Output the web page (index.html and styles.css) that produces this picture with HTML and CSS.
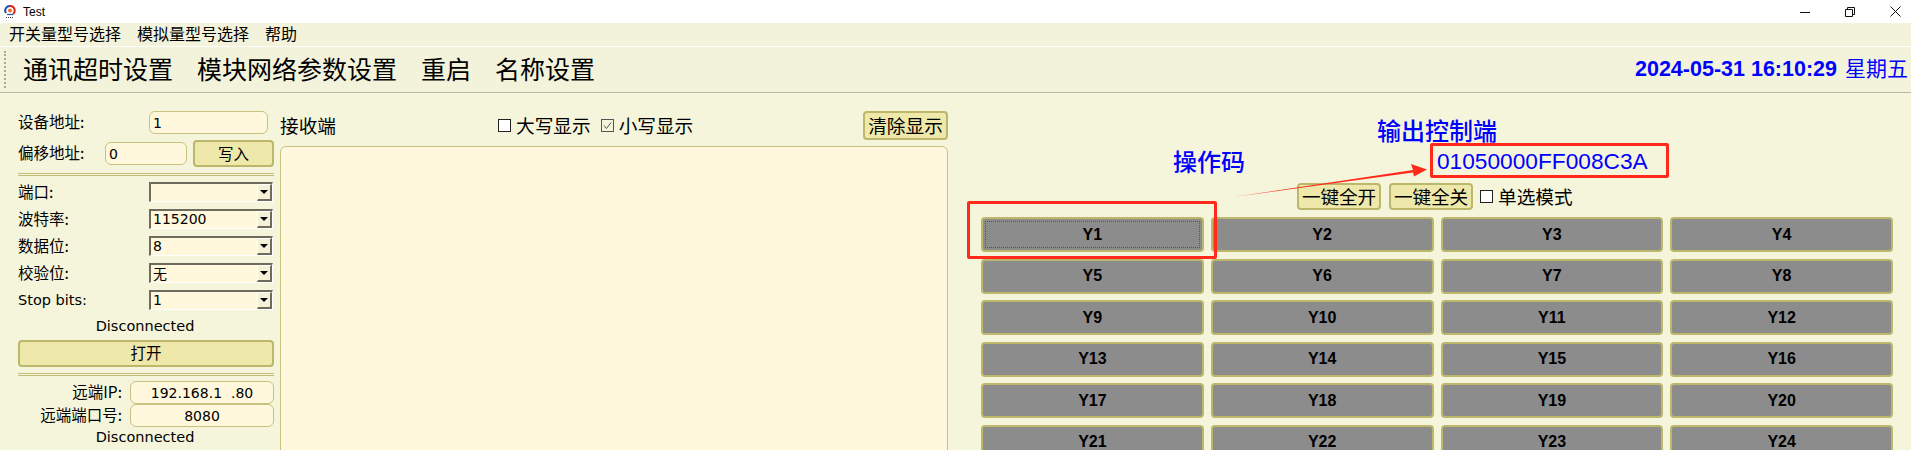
FILE: index.html
```html
<!DOCTYPE html>
<html lang="en">
<head>
    <meta charset="UTF-8">
    <meta name="viewport" content="width=device-width, initial-scale=1.0">
    <title>Test</title>
    <link rel="stylesheet" href="styles.css">
</head>
<body>
    <div class="titlebar">
        <svg class="app-icon" width="12" height="14" viewBox="0 0 12 14">
            <path d="M6 1A4.5 4.5 0 0 0 2 8" fill="none" stroke="#1f4fb0" stroke-width="2"/>
            <path d="M6 1A4.5 4.5 0 0 1 9 9" fill="none" stroke="#d8281e" stroke-width="2"/>
            <circle cx="6" cy="5.5" r="2" fill="#e8702a"/>
            <path d="M3 9.5h6" stroke="#1f4fb0" stroke-width="1.2"/>
            <path d="M2 12.5h1M4 12.5h1M6 12.5h1M8 12.5h1" stroke="#333" stroke-width="1"/>
        </svg>
        <span class="title-text">Test</span>
        <div class="window-buttons">
            <svg width="10" height="10" viewBox="0 0 10 10"><path d="M0 5.5h10" stroke="#111" fill="none"/></svg>
            <svg width="10" height="10" viewBox="0 0 10 10"><path d="M.5 2.5h7v7h-7zM2.5 2.5v-2h7v7h-2" stroke="#111" fill="none"/></svg>
            <svg width="11" height="11" viewBox="0 0 11 11"><path d="M.5 .5l10 10M10.5 .5l-10 10" stroke="#111" fill="none"/></svg>
        </div>
    </div>

    <div class="menubar">
        <span class="menu-item">开关量型号选择</span>
        <span class="menu-item">模拟量型号选择</span>
        <span class="menu-item">帮助</span>
    </div>

    <div class="toolbar">
        <div class="grip"></div>
        <div class="tool-item">通讯超时设置</div>
        <div class="tool-item">模块网络参数设置</div>
        <div class="tool-item">重启</div>
        <div class="tool-item">名称设置</div>
        <div class="clock"><span class="clock-time">2024-05-31 16:10:29</span><span class="clock-day">星期五</span></div>
    </div>

    <div class="main">
        <div class="left-panel">
            <div class="row first-row">
                <span class="label wide-label">设备地址:</span>
                <div class="field device-field">1</div>
            </div>
            <div class="row write-row">
                <span class="label offset-label">偏移地址:</span>
                <div class="field offset-field">0</div>
                <div class="button write-button">写入</div>
            </div>
            <div class="separator"></div>
            <div class="combo-list">
                <div class="row combo-row"><span class="label wide-label">端口:</span><div class="combo"><span class="combo-arrow"></span></div></div>
                <div class="row combo-row"><span class="label wide-label">波特率:</span><div class="combo">115200<span class="combo-arrow"></span></div></div>
                <div class="row combo-row"><span class="label wide-label">数据位:</span><div class="combo">8<span class="combo-arrow"></span></div></div>
                <div class="row combo-row"><span class="label wide-label">校验位:</span><div class="combo combo-cjk">无<span class="combo-arrow"></span></div></div>
                <div class="row combo-row"><span class="label wide-label latin">Stop bits:</span><div class="combo">1<span class="combo-arrow"></span></div></div>
            </div>
            <div class="status">Disconnected</div>
            <div class="button open-button">打开</div>
            <div class="separator"></div>
            <div class="row remote-row">
                <span class="label remote-label">远端IP:</span>
                <div class="field remote-field">192.168.1&nbsp;&nbsp;.80</div>
            </div>
            <div class="row remote-row">
                <span class="label remote-label">远端端口号:</span>
                <div class="field remote-field">8080</div>
            </div>
            <div class="status status-small">Disconnected</div>
            <div class="separator"></div>
        </div>

        <div class="center-panel">
            <div class="receive-head">
                <span class="receive-title">接收端</span>
                <label class="check"><span class="check-box"></span><span class="check-text">大写显示</span></label>
                <label class="check"><span class="check-box is-checked"><svg width="11" height="11" viewBox="0 0 11 11"><path d="M2 5.5l2.5 3L9 2.5" stroke="#555" fill="none"/></svg></span><span class="check-text">小写显示</span></label>
                <div class="button clear-button">清除显示</div>
            </div>
            <div class="receive-box"></div>
        </div>

        <div class="right-panel">
            <div class="output-actions">
                <div class="button action-button">一键全开</div>
                <div class="button action-button">一键全关</div>
                <label class="check"><span class="check-box"></span><span class="check-text">单选模式</span></label>
            </div>
            <div class="output-grid">
                <div class="button output-button"><span class="focus-ring">Y1</span></div>
                <div class="button output-button">Y2</div>
                <div class="button output-button">Y3</div>
                <div class="button output-button">Y4</div>
                <div class="button output-button">Y5</div>
                <div class="button output-button">Y6</div>
                <div class="button output-button">Y7</div>
                <div class="button output-button">Y8</div>
                <div class="button output-button">Y9</div>
                <div class="button output-button">Y10</div>
                <div class="button output-button">Y11</div>
                <div class="button output-button">Y12</div>
                <div class="button output-button">Y13</div>
                <div class="button output-button">Y14</div>
                <div class="button output-button">Y15</div>
                <div class="button output-button">Y16</div>
                <div class="button output-button">Y17</div>
                <div class="button output-button">Y18</div>
                <div class="button output-button">Y19</div>
                <div class="button output-button">Y20</div>
                <div class="button output-button">Y21</div>
                <div class="button output-button">Y22</div>
                <div class="button output-button">Y23</div>
                <div class="button output-button">Y24</div>
            </div>
        </div>
    </div>

    <!-- red and blue notes drawn over the screenshot -->
    <div class="note note-output">输出控制端</div>
    <div class="note note-opcode">操作码</div>
    <div class="note-box code-box">01050000FF008C3A</div>
    <div class="note-box y1-box"></div>
    <svg class="note-arrow" width="1911" height="450" viewBox="0 0 1911 450">
        <polygon points="1233,197 1413,170 1411,164 1427,169.5 1414,176.5 1413,172.5" fill="#ff2a1a"/>
    </svg>
</body>
</html>
```

FILE: styles.css
```css
html, body {
    height: 100%;
}
body {
    background-color: #f5f5dc;
    font-family: "Noto Sans CJK SC", "Liberation Sans", sans-serif;
    color: #000;
    margin: 0;
    padding: 0;
    overflow: hidden;
    position: relative;
}

/* window chrome */
.titlebar {
    height: 23px;
    background-color: #fff;
    display: flex;
    align-items: center;
    padding-left: 4px;
}
.app-icon {
    margin-right: 7px;
}
.title-text {
    font-family: "Liberation Sans", sans-serif;
    font-size: 12px;
}
.window-buttons {
    margin-left: auto;
    display: flex;
    align-items: center;
    gap: 35px;
    padding-right: 10px;
}
.menubar {
    height: 23px;
    background-color: #f3f3db;
    border-bottom: 1px solid #fff;
    display: flex;
    align-items: center;
}
.menu-item {
    font-size: 16px;
    line-height: 21px;
    padding: 0 8px 2px;
}
.menu-item:first-child {
    margin-left: 1px;
}
.toolbar {
    height: 45px;
    background-color: #f3f3db;
    border-bottom: 1px solid #b9b9a3;
    display: flex;
    align-items: center;
    padding-left: 4px;
}
.grip {
    width: 2px;
    height: 37px;
    border-left: 2px dotted #a9a9a0;
    margin-right: 15px;
}
.tool-item {
    font-size: 25px;
    line-height: 43px;
    padding-bottom: 2px;
    margin-right: 24px;
}
.clock {
    margin-left: auto;
    color: #0000ff;
    display: flex;
    align-items: center;
    padding-right: 3px;
}
.clock-time {
    font-family: "Liberation Sans", sans-serif;
    font-weight: bold;
    font-size: 21.5px;
}
.clock-day {
    font-size: 21px;
    line-height: 30px;
    padding-bottom: 5px;
    margin-left: 8px;
}

/* page columns */
.main {
    display: flex;
}
.left-panel {
    width: 256px;
    padding: 0 6px 0 18px;
    flex: none;
}
.center-panel {
    width: 668px;
    flex: none;
}
.right-panel {
    width: 912px;
    padding-left: 33px;
    flex: none;
}

/* left form */
.row {
    display: flex;
    align-items: center;
}
.first-row {
    margin-top: 18px;
    height: 23px;
}
.write-row {
    margin-top: 6px;
    height: 27px;
}
.label {
    font-size: 15.5px;
    line-height: 20px;
    padding-bottom: 3px;
    white-space: nowrap;
    flex: none;
}
.latin {
    font-family: "DejaVu Sans", sans-serif;
    font-size: 14.5px;
    padding-bottom: 0;
}
.wide-label {
    width: 131px;
}
.offset-label {
    width: 87px;
}
.field {
    background-color: #fff8dc;
    border: 1px solid #c9c27f;
    border-radius: 6px;
    box-sizing: border-box;
    height: 23px;
    line-height: 23px;
    padding-left: 3px;
    font-family: "DejaVu Sans", sans-serif;
    font-size: 14px;
}
.device-field {
    width: 119px;
}
.offset-field {
    width: 82px;
}
.button {
    background-color: #eee8aa;
    border: 2px solid #bdb76b;
    border-radius: 4px;
    box-sizing: border-box;
    display: flex;
    align-items: center;
    justify-content: center;
    white-space: nowrap;
}
.write-button {
    width: 81px;
    height: 27px;
    margin-left: 6px;
    padding-bottom: 2px;
    font-size: 15.5px;
}
.separator {
    height: 1px;
    border-top: 1px solid #c4bd78;
    border-bottom: 1px solid #c4bd78;
    margin-top: 6px;
}
.combo-list {
    margin-top: 6px;
    display: flex;
    flex-direction: column;
    gap: 7px;
}
.combo-row {
    height: 20px;
}
.combo {
    width: 124px;
    height: 20px;
    box-sizing: border-box;
    background-color: #fff8dc;
    border-top: 2px solid #6e6a5e;
    border-left: 2px solid #6e6a5e;
    border-right: 1px solid #fff;
    border-bottom: 1px solid #fff;
    position: relative;
    padding-left: 2px;
    font-family: "DejaVu Sans", sans-serif;
    font-size: 14px;
    line-height: 16px;
}
.combo-cjk {
    font-family: "Noto Sans CJK SC", sans-serif;
}
.combo-arrow {
    position: absolute;
    right: 0;
    top: 0;
    bottom: 0;
    width: 15px;
    box-sizing: border-box;
    background-color: #f5f1d8;
    border-right: 2px solid #6e6a5e;
    border-bottom: 2px solid #6e6a5e;
    border-top: 1px solid #fff;
    border-left: 1px solid #fff;
}
.combo-arrow::after {
    content: "";
    position: absolute;
    left: 2px;
    top: 5px;
    border-left: 4px solid transparent;
    border-right: 4px solid transparent;
    border-top: 4px solid #000;
}
.status {
    font-family: "DejaVu Sans", sans-serif;
    font-size: 14.5px;
    text-align: center;
    height: 20px;
    line-height: 22px;
    margin-top: 5px;
    padding-right: 2px;
}
.status-small {
    height: 18px;
    line-height: 20px;
    margin-top: 0;
}
.open-button {
    height: 27px;
    margin-top: 5px;
    padding-bottom: 3px;
    font-size: 15.5px;
}
.remote-row {
    height: 23px;
}
.remote-row .field {
    text-align: center;
    padding-left: 0;
}
.separator + .remote-row {
    margin-top: 5px;
}
.remote-label {
    width: 104px;
    margin-right: 8px;
    text-align: right;
}
.remote-field {
    width: 144px;
}

/* receive area */
.receive-head {
    margin-top: 18px;
    height: 29px;
    display: flex;
    align-items: center;
}
.receive-title {
    font-size: 18.67px;
    line-height: 26px;
    padding-bottom: 2px;
    width: 218px;
    flex: none;
}
.check {
    display: flex;
    align-items: center;
    gap: 5px;
    font-size: 18.67px;
    margin-right: 10px;
}
.check-text {
    line-height: 26px;
    padding-bottom: 2px;
}
.check-box {
    width: 13px;
    height: 13px;
    box-sizing: border-box;
    background-color: #fff;
    border: 1px solid #222;
    display: block;
    flex: none;
}
.check-box.is-checked {
    background-color: transparent;
    border-color: #555;
}
.check-box svg {
    display: block;
}
.clear-button {
    margin-left: auto;
    width: 85px;
    height: 29px;
    padding-bottom: 2px;
    font-size: 18.67px;
}
.receive-box {
    margin-top: 6px;
    height: 320px;
    background-color: #fff8dc;
    border: 1px solid #c9c27f;
    border-radius: 6px;
    box-sizing: border-box;
}

/* output buttons */
.output-actions {
    margin-top: 90px;
    margin-left: 316px;
    height: 27px;
    display: flex;
    align-items: center;
    gap: 8px;
}
.action-button {
    width: 84px;
    height: 27px;
    padding-bottom: 2px;
    font-size: 18.67px;
    letter-spacing: -0.2px;
}
.output-actions .check {
    margin-left: -1px;
}
.output-grid {
    margin-top: 7px;
    display: grid;
    grid-template-columns: repeat(4, 1fr);
    grid-auto-rows: 35px;
    column-gap: 7px;
    row-gap: 6.6px;
}
.output-button {
    background-color: #8c8c8c;
    font-family: "Liberation Sans", sans-serif;
    font-weight: bold;
    font-size: 16px;
}
.focus-ring {
    display: flex;
    align-items: center;
    justify-content: center;
    align-self: stretch;
    flex: 1;
    margin: 2px;
    border: 1px dotted #555;
}

/* notes on top of the picture */
.note {
    position: absolute;
    color: #0000ff;
    font-size: 24px;
    font-weight: 500;
    line-height: 30px;
    white-space: nowrap;
}
.note-output {
    left: 1377px;
    top: 115px;
}
.note-opcode {
    left: 1173px;
    top: 146px;
}
.note-box {
    position: absolute;
    box-sizing: border-box;
    border: 3px solid #ff2a1a;
    border-radius: 2px;
}
.code-box {
    left: 1430px;
    top: 143px;
    width: 239px;
    height: 35px;
    padding-left: 4px;
    color: #0000ff;
    font-family: "Liberation Sans", sans-serif;
    font-size: 22.7px;
    line-height: 31px;
    white-space: nowrap;
}
.y1-box {
    left: 967px;
    top: 201px;
    width: 250px;
    height: 58px;
}
.note-arrow {
    position: absolute;
    left: 0;
    top: 0;
}
```
